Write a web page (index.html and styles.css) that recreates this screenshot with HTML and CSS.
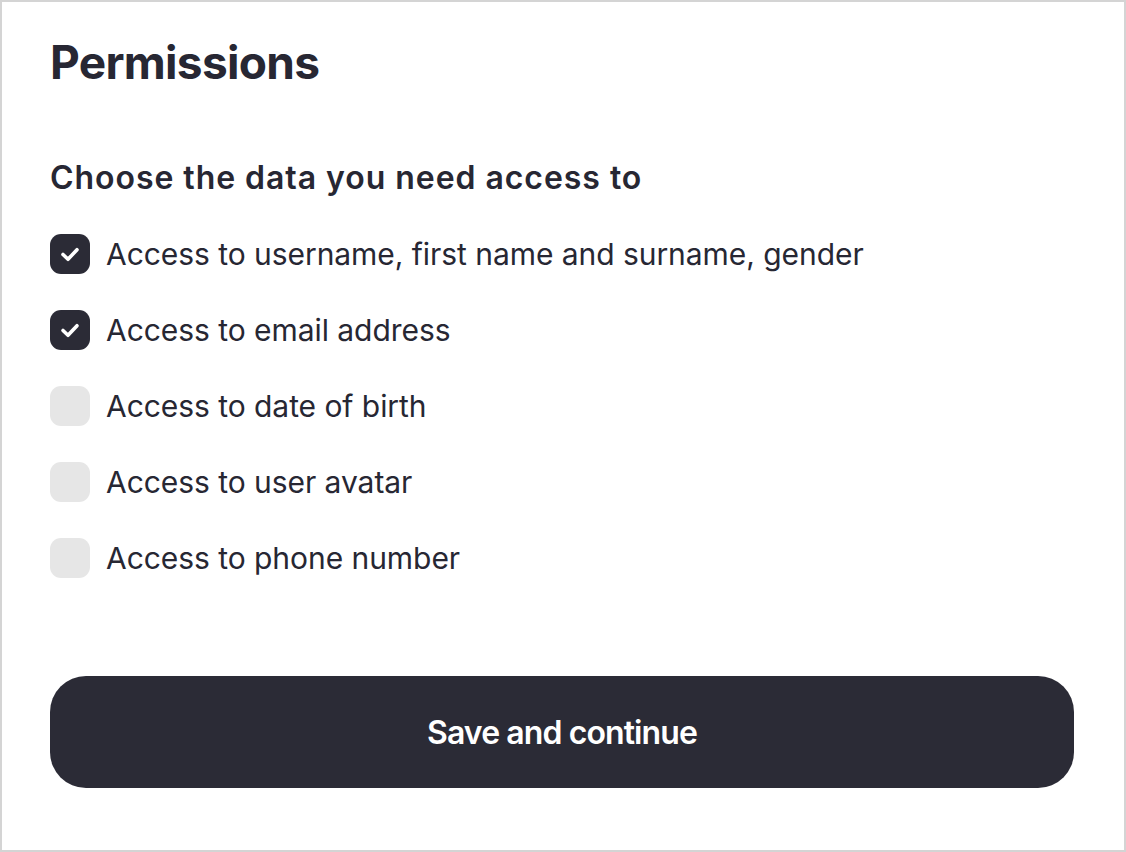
FILE: index.html
```html
<!DOCTYPE html>
<html lang="en">
<head>
<meta charset="utf-8">
<title>Permissions</title>
<link rel="stylesheet" href="styles.css">
</head>
<body>
<div class="card">
  <h1 class="title">Permissions</h1>
  <h2 class="subtitle">Choose the data you need access to</h2>
  <ul class="options">
    <li class="option">
      <span class="box checked"><svg viewBox="0 0 40 40" width="40" height="40"><path d="M13 20.5l5 4.8 9-9.6" fill="none" stroke="#fff" stroke-width="3.6" stroke-linecap="round" stroke-linejoin="round"/></svg></span>
      <span class="label">Access to username, first name and surname, gender</span>
    </li>
    <li class="option">
      <span class="box checked"><svg viewBox="0 0 40 40" width="40" height="40"><path d="M13 20.5l5 4.8 9-9.6" fill="none" stroke="#fff" stroke-width="3.6" stroke-linecap="round" stroke-linejoin="round"/></svg></span>
      <span class="label">Access to email address</span>
    </li>
    <li class="option">
      <span class="box"></span>
      <span class="label">Access to date of birth</span>
    </li>
    <li class="option">
      <span class="box"></span>
      <span class="label">Access to user avatar</span>
    </li>
    <li class="option">
      <span class="box"></span>
      <span class="label">Access to phone number</span>
    </li>
  </ul>
  <button class="submit" type="button">Save and continue</button>
</div>
</body>
</html>
```

FILE: styles.css
```css
* { box-sizing: border-box; }
html, body { margin: 0; padding: 0; background: #fff; }
body {
  font-family: Inter, "Open Sans", "Liberation Sans", sans-serif;
  color: #272733;
}
.card {
  width: 1126px;
  height: 852px;
  border: 2px solid #d4d4d4;
  padding: 0 50px 0 48px;
  display: flex;
  flex-direction: column;
}
.title {
  margin: 34px 0 0;
  font-size: 46px;
  line-height: 52px;
  font-weight: 700;
  letter-spacing: -0.7px;
}
.subtitle {
  margin: 72px 0 0;
  font-size: 32px;
  line-height: 36px;
  font-weight: 600;
  letter-spacing: 0.95px;
}
.options {
  list-style: none;
  margin: 38px 0 0;
  padding: 0;
  display: flex;
  flex-direction: column;
  gap: 36px;
}
.option {
  display: flex;
  align-items: center;
  gap: 16px;
  height: 40px;
}
.box {
  width: 40px;
  height: 40px;
  border-radius: 11px;
  background: #e6e6e6;
  flex: none;
  display: flex;
}
.box.checked { background: #2b2b36; }
.label {
  font-size: 30px;
  line-height: 40px;
  font-weight: 400;
  letter-spacing: -0.05px;
}
.submit {
  margin-top: 98px;
  width: 1024px;
  height: 112px;
  border: 0;
  border-radius: 36px;
  background: #2b2b36;
  color: #fff;
  font-family: inherit;
  font-size: 32px;
  font-weight: 600;
  letter-spacing: -0.9px;
}
```
